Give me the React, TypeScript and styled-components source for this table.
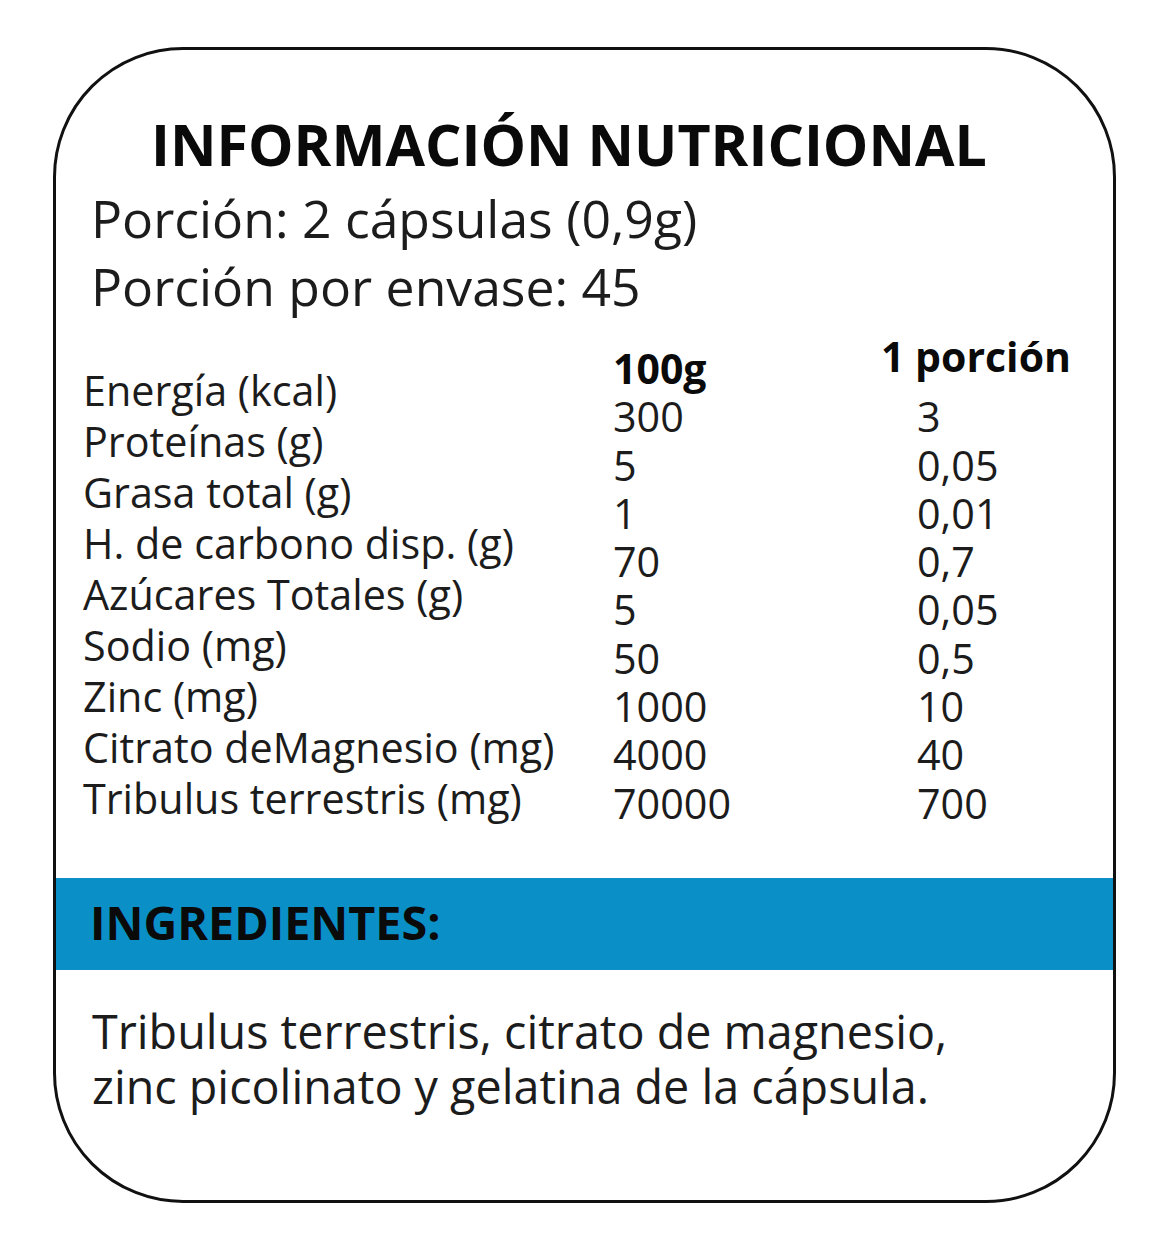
import * as React from 'react';
import styled, { createGlobalStyle } from 'styled-components';

const GlobalStyle = createGlobalStyle`
  body {
    margin: 0;
    background: #ffffff;
    font-family: "Open Sans", "DejaVu Sans", sans-serif;
    color: #1c1c1c;
  }
`;

const Page = styled.div`
  width: 1170px;
  height: 1244px;
  padding: 47px 0 0 53px;
  box-sizing: border-box;
`;

const Card = styled.section`
  width: 1063px;
  height: 1156px;
  box-sizing: border-box;
  border: 3px solid #111111;
  border-radius: 130px;
  overflow: hidden;
  display: flex;
  flex-direction: column;
`;

const Title = styled.h1`
  margin: 0;
  padding: 60px 0 0 95px;
  font-size: 57.3px;
  line-height: 68px;
  font-weight: 700;
  color: #0a0a0a;
  white-space: nowrap;
`;

const Serving = styled.div`
  margin-top: 6px;
  padding-left: 35px;
  font-size: 51.7px;
  line-height: 68px;
`;

const Table = styled.div`
  display: flex;
  margin-top: 12px;
  padding-left: 27px;
`;

const Column = styled.div<{ $width?: number; $top: number }>`
  width: ${(p) => (p.$width ? `${p.$width}px` : 'auto')};
  padding-top: ${(p) => p.$top}px;
  display: flex;
  flex-direction: column;
`;

const Label = styled.div`
  font-size: 41.3px;
  line-height: 51px;
  white-space: nowrap;
`;

const Value = styled.div<{ $bold?: boolean }>`
  font-size: ${(p) => (p.$bold ? 41 : 41.3)}px;
  font-weight: ${(p) => (p.$bold ? 700 : 400)};
  color: ${(p) => (p.$bold ? '#0a0a0a' : '#1c1c1c')};
  line-height: 48.3px;
  white-space: nowrap;
`;

const PortionHead = styled(Value)`
  margin: 0 0 12px -36px;
`;

const Band = styled.div`
  margin-top: 51px;
  height: 92px;
  background: #0b8fc7;
  display: flex;
  align-items: center;
  padding-left: 34px;
`;

const BandTitle = styled.h2`
  margin: 0 0 4px;
  font-size: 46.7px;
  line-height: 60px;
  font-weight: 700;
  color: #0a0a0a;
`;

const Ingredients = styled.p`
  margin: 34px 0 0;
  padding-left: 36px;
  font-size: 46.7px;
  line-height: 55px;
`;

const rows: [string, string, string][] = [
  ['Energía (kcal)', '300', '3'],
  ['Proteínas (g)', '5', '0,05'],
  ['Grasa total (g)', '1', '0,01'],
  ['H. de carbono disp. (g)', '70', '0,7'],
  ['Azúcares Totales (g)', '5', '0,05'],
  ['Sodio (mg)', '50', '0,5'],
  ['Zinc (mg)', '1000', '10'],
  ['Citrato deMagnesio (mg)', '4000', '40'],
  ['Tribulus terrestris (mg)', '70000', '700'],
];

const App = () => {
  return (
    <Page>
      <GlobalStyle />
      <Card>
        <Title>INFORMACIÓN NUTRICIONAL</Title>
        <Serving>
          Porción: 2 cápsulas (0,9g)
          <br />
          Porción por envase: 45
        </Serving>

        <Table>
          <Column $width={530} $top={33}>
            {rows.map((r) => (
              <Label key={r[0]}>{r[0]}</Label>
            ))}
          </Column>
          <Column $width={304} $top={12}>
            <Value $bold>100g</Value>
            {rows.map((r) => (
              <Value key={r[0]}>{r[1]}</Value>
            ))}
          </Column>
          <Column $top={0}>
            <PortionHead $bold>1 porción</PortionHead>
            {rows.map((r) => (
              <Value key={r[0]}>{r[2]}</Value>
            ))}
          </Column>
        </Table>

        <Band>
          <BandTitle>INGREDIENTES:</BandTitle>
        </Band>

        <Ingredients>
          Tribulus terrestris, citrato de magnesio,
          <br />
          zinc picolinato y gelatina de la cápsula.
        </Ingredients>
      </Card>
    </Page>
  );
};

export default App;
